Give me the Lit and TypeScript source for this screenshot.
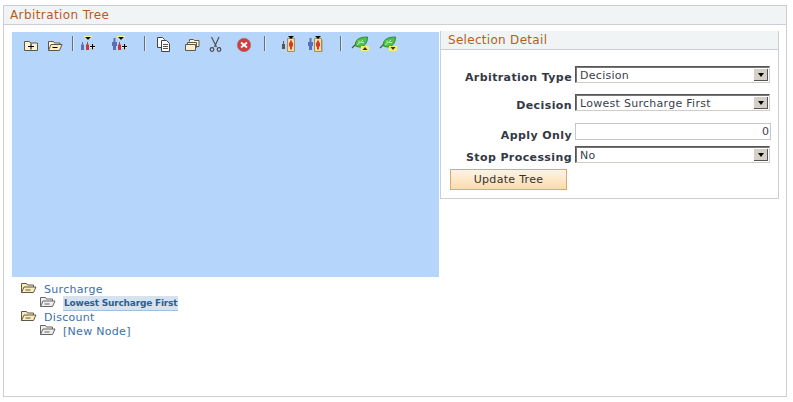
import { LitElement, html, css, svg } from "lit";
import { customElement } from "lit/decorators.js";

const tri = (x: number) => svg`<path d="M${x} 0h8v1l-3 3h-2l-3-3z" fill="#fff6a0"/><path d="M${x + 1} 1h6l-3 3z" fill="#000"/>`;
const plus = svg`<path d="M11 10h5v2h-5zM12.500 8h2v6h-2z" fill="#fffbc0"/><path d="M11 10.500h5M13.500 8v5.500" stroke="#000" stroke-width="1.200" fill="none"/>`;
const node = (x: number) => svg`<path d="M${x + 0.5} 2.500h7v13h-7z" fill="#f3dc93" stroke="#a3905c"/><path d="M${x + 2} 4h4v10h-4z" fill="#fbe9a8"/><path d="M${x + 3} 4.500h2v2h1v4h-1v3h-2v-3h-1v-4h1z" fill="#d9372f"/><path d="M${x + 1} 0h6l-3 3z" fill="#000"/>`;
const leaf = svg`<path d="M1 12l5-5" stroke="#5a5346" stroke-width="1.300" fill="none"/><path d="M4.500 10C3.500 4 8 1 16.500 1c0 6-3 10-8.500 10z" fill="#4fc04c" stroke="#2e8a38"/><path d="M6 9l6-5M8 4.500v3M10 6.500h3" stroke="#b6eda0" fill="none"/>`;

const icons: Record<string, unknown> = {
  add: svg`<svg class="ic" viewBox="0 0 16 16"><path d="M1.500 14.500v-9h5l1 1.500h7v7.500z" fill="#fbf3d3" stroke="#5e584c"/><path d="M5 10.500h6M8 7.500v6" stroke="#000" fill="none"/></svg>`,
  remove: svg`<svg class="ic" viewBox="0 0 16 16"><path d="M1.500 14.500v-9h5l1 1.500h5.500v2" fill="#fbf3d3" stroke="#5e584c"/><path d="M1.500 14.500l2.500-6h11l-2.500 6z" fill="#f9edc4" stroke="#5e584c"/><path d="M5.500 11.500h5" stroke="#000" fill="none"/></svg>`,
  people: svg`<svg class="ic" viewBox="0 0 16 16">${tri(5)}<path d="M2 8.500h3v5.500H2zM3 6h1v2.500H3z" fill="#5a6fb8"/><path d="M7 8.500h3v5.500H7zM8 6h1v2.500H8z" fill="#c9363a"/>${plus}</svg>`,
  peopleBig: svg`<svg class="ic" viewBox="0 0 16 16">${tri(6)}<path d="M1 6h5v4H5v4H2v-4H1zM2.500 2h2v4h-2z" fill="#5a6fb8"/><path d="M7 8.500h3v5.500H7zM8 6h1v2.500H8z" fill="#c9363a"/>${plus}</svg>`,
  copy: svg`<svg class="ic" viewBox="0 0 16 16"><path d="M1.500 1.500h5l2 2v8h-7z" fill="#fff" stroke="#444"/><path d="M5.500 4.500h5l3 3v8h-8z" fill="#fff" stroke="#444"/><path d="M7 8.500h5M7 10.500h5M7 12.500h5" stroke="#555"/></svg>`,
  paste: svg`<svg class="ic" viewBox="0 0 16 16"><path d="M5.500 5.500v-2h4l1 1h4.500v6h-3" fill="#fbf3d3" stroke="#5e584c"/><path d="M3.500 10.500v-4h9v5h-2" fill="#f7efd0" stroke="#5e584c"/><path d="M1.500 14.500v-6h10v6z" fill="#f7efd0" stroke="#5e584c"/></svg>`,
  cut: svg`<svg class="ic" viewBox="0 0 16 16"><path d="M4.500 1l5 10M12 1L7.500 11" stroke="#4b4b4b" stroke-width="1.100" fill="none"/><circle cx="5" cy="13.500" r="1.800" fill="none" stroke="#4b4b4b" stroke-width="1.200"/><circle cx="12" cy="13.500" r="1.800" fill="none" stroke="#4b4b4b" stroke-width="1.200"/></svg>`,
  del: svg`<svg class="ic" viewBox="0 0 16 16"><circle cx="8" cy="9" r="6.700" fill="#d6393f" stroke="#9c7a7a" stroke-width=".7"/><path d="M5 6.500l6 5M11 6.500l-6 5" stroke="#fff" stroke-width="1.800"/></svg>`,
  nodeLeft: svg`<svg class="ic" viewBox="0 0 16 16"><path d="M1 8h1V5h1v3h1v5H1z" fill="#555"/>${node(6)}</svg>`,
  nodeRight: svg`<svg class="ic" viewBox="0 0 16 16"><path d="M1 6h5v4H5v4H2v-4H1zM2.500 2h2v4h-2z" fill="#5a6fb8"/><path d="M9 16h7V4h-1v11H9z" fill="#a9b4c0"/>${node(7)}</svg>`,
  leafUp: svg`<svg class="ic wide" viewBox="0 0 18 16">${leaf}<path d="M10 10h8v5h-8z" fill="#ffea70"/><path d="M11.500 14h5l-2.500-3z" fill="#333"/></svg>`,
  leafDown: svg`<svg class="ic wide" viewBox="0 0 18 16">${leaf}<path d="M10 10h8v5h-8z" fill="#ffea70"/><path d="M11.500 11h5l-2.500 3z" fill="#333"/></svg>`,
};

const treeFolder = (fill: string, stroke: string) => svg`<svg class="tf" viewBox="0 0 17 12"><path d="M1.500 10.500v-9h5l1 1.500h6v2" fill="${fill}" stroke="${stroke}"/><path d="M1.500 10.500l2.500-5.500h12l-2.500 5.500z" fill="${fill}" stroke="${stroke}"/><path d="M5.500 8h5" stroke="${stroke}"/></svg>`;

type T = { k: string; m: number } | { sep: true; m: number };
const tools: T[] = [
  { k: "add", m: 0 }, { k: "remove", m: 8 }, { sep: true, m: 9 },
  { k: "people", m: 5 }, { k: "peopleBig", m: 16 }, { sep: true, m: 17 },
  { k: "copy", m: 10 }, { k: "paste", m: 12 }, { k: "cut", m: 7 }, { k: "del", m: 13 }, { sep: true, m: 12 },
  { k: "nodeLeft", m: 15 }, { k: "nodeRight", m: 10 }, { sep: true, m: 17 },
  { k: "leafUp", m: 9 }, { k: "leafDown", m: 10 },
];

@customElement("app-root")
export class AppRoot extends LitElement {
  static styles = css`
    :host { display: block; width: 793px; height: 402px; background: #fff; font-family: "DejaVu Sans", Verdana, sans-serif; font-size: 11px; color: #333; box-sizing: border-box; padding: 5px 3px 0 3px; overflow: hidden; }
    .frame { width: 784px; height: 392px; box-sizing: border-box; border: 1px solid #cbcfd4; display: flex; flex-direction: column; }
    .head { height: 18px; background: #f0f4f5; border-bottom: 1px solid #cbcfd4; padding-left: 6px; color: #b85b1d; font-size: 12px; letter-spacing: .4px; line-height: 19px; }
    .body { display: flex; align-items: flex-start; padding: 6px 0 0 8px; }
    .left { width: 427px; margin-top: 1px; }
    .blue { height: 245px; background: #b5d5fb; display: flex; align-items: flex-start; padding: 4px 0 0 11px; box-sizing: border-box; }
    .ic { width: 16px; height: 16px; display: block; flex: none; }
    .ic.wide { width: 18px; }
    .sep { width: 1px; height: 15px; background: #66707c; flex: none; border-right: 1px solid #dbe7f5; }
    .tree { padding: 4px 0 0 8px; color: #3a70a8; line-height: 14px; letter-spacing: .3px; }
    .row { display: flex; align-items: center; height: 14px; }
    .row.sub { padding-left: 19px; }
    .row span { padding-top: 4px; }
    .tf { width: 17px; height: 12px; flex: none; margin-right: 7px; }
    .row span.sel-node { font-weight: bold; font-size: 9px; letter-spacing: -.2px; background: #d6e2ee; border-bottom: 1px solid #9fbfdd; line-height: 13px; padding: 1px 1px 0; margin-top: 2px; color: #2a5f96; height: 13px; white-space: nowrap; box-sizing: content-box; }
    .panel { width: 339px; margin-left: 1px; height: 168px; box-sizing: border-box; border: 1px solid #cbcfd4; border-top: none; }
    .phead { height: 18px; background: #f0f4f5; border-bottom: 1px solid #cbcfd4; padding-left: 7px; color: #b85b1d; font-size: 12px; letter-spacing: .3px; line-height: 19px; }
    .form { display: grid; grid-template-columns: 131px 195px; column-gap: 3px; padding: 16px 0 0 0; }
    .lab { text-align: right; font-weight: bold; color: #333845; line-height: 17px; padding-top: 3px; box-sizing: border-box; height: 17px; white-space: nowrap; letter-spacing: .4px; }
    .lab.r3 { padding-top: 4px; }
    .r1 { margin-bottom: 11px; }
    .r2 { margin-bottom: 12px; }
    .r3 { margin-bottom: 6px; }
    .select { height: 17px; box-sizing: border-box; border: 1px solid; border-color: #555 #d0cdc6 #d0cdc6 #555; box-shadow: inset 1px 1px 0 #777; background: #fff; display: flex; align-items: center; justify-content: space-between; padding-left: 4px; color: #3a3f4a; line-height: 15px; letter-spacing: .28px; }
    .label-text { padding-top: 1px; }
    .arrow { width: 15px; height: 13px; margin-right: 1px; background: #d4d0c8; box-shadow: inset 1px 1px 0 #fff, inset -1px -1px 0 #555; display: flex; align-items: center; justify-content: center; flex: none; }
    .arrow i { display: block; width: 0; height: 0; border-left: 3px solid transparent; border-right: 3px solid transparent; border-top: 4px solid #000; }
    .input { height: 17px; width: 196px; box-sizing: border-box; border: 1px solid #c3c7cc; background: #fff; text-align: right; padding-right: 1px; line-height: 15px; color: #3a3f4a; }
    .btn { margin: 6px 0 0 9px; width: 117px; height: 21px; box-sizing: border-box; border: 1px solid #e0a868; background: linear-gradient(#fef4e2, #fbdcae); color: #333; font: inherit; letter-spacing: .3px; padding: 0; line-height: 19px; display: block; }
  `;

  render() {
    return html`<div class="frame">
      <div class="head">Arbitration Tree</div>
      <div class="body">
        <div class="left">
          <div class="blue">
            ${tools.map((t) =>
              "sep" in t
                ? html`<div class="sep" style="margin-left:${t.m}px"></div>`
                : html`<div style="margin-left:${t.m}px">${icons[t.k]}</div>`
            )}
          </div>
          <div class="tree">
            <div class="row">${treeFolder("#fbeeb8", "#5e584c")}<span>Surcharge</span></div>
            <div class="row sub">${treeFolder("#eeeeee", "#666")}<span class="sel-node">Lowest Surcharge First</span></div>
            <div class="row">${treeFolder("#fbeeb8", "#5e584c")}<span>Discount</span></div>
            <div class="row sub">${treeFolder("#eeeeee", "#666")}<span>[New Node]</span></div>
          </div>
        </div>
        <div class="panel">
          <div class="phead">Selection Detail</div>
          <div class="form">
            <div class="lab r1">Arbitration Type</div>
            <div class="select r1"><span class="label-text">Decision</span><span class="arrow"><i></i></span></div>
            <div class="lab r2">Decision</div>
            <div class="select r2"><span class="label-text">Lowest Surcharge First</span><span class="arrow"><i></i></span></div>
            <div class="lab r3">Apply Only</div>
            <div class="input r3">0</div>
            <div class="lab">Stop Processing</div>
            <div class="select"><span class="label-text">No</span><span class="arrow"><i></i></span></div>
          </div>
          <button class="btn">Update Tree</button>
        </div>
      </div>
    </div>`;
  }
}
